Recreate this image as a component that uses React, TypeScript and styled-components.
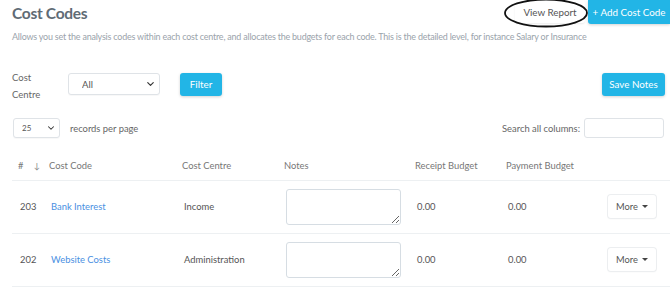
import React from "react"
import styled, { createGlobalStyle } from "styled-components"
import { ChevronDown } from "lucide-react"

const GlobalStyle = createGlobalStyle`
  html, body {
    margin: 0;
    padding: 0;
    background: #fff;
  }
  body {
    font-family: "Lato", "Noto Sans", sans-serif;
    color: #5e6770;
    width: 670px;
    height: 287px;
    overflow: hidden;
  }
`

const Page = styled.div`
  padding: 0 6px 0 12px;
  box-sizing: border-box;
  width: 670px;
`

const Header = styled.div`
  display: flex;
  align-items: flex-start;
  justify-content: space-between;
`

const Title = styled.h1`
  margin: 4px 0 0;
  font-size: 15.5px;
  font-weight: 700;
  color: #5f6b75;
  letter-spacing: -0.3px;
`

const HeaderActions = styled.div`
  position: relative;
  display: flex;
  align-items: flex-start;
  margin-right: -6px;
`

const Button = styled.button<{ $variant?: "primary" | "plain" | "light" }>`
  font-family: inherit;
  font-size: 9.8px;
  border-radius: 3px;
  cursor: pointer;
  height: 23px;
  padding: 0 10px;
  border: none;
  white-space: nowrap;
  color: ${p => (p.$variant === "primary" ? "#fff" : "#555")};
  background: ${p => (p.$variant === "primary" ? "#22b5e6" : "#fff")};
  box-shadow: ${p =>
    p.$variant === "primary"
      ? "0 1px 3px rgba(0,0,0,0.18)"
      : p.$variant === "light"
      ? "0 0 0 1px #eceef0, 0 1px 2px rgba(0,0,0,0.06)"
      : "0 1px 2px rgba(0,0,0,0.08)"};
`

const ViewReportButton = styled(Button)`
  margin-right: 3px;
  width: 70px;
  padding: 0;
`

const AddButton = styled(Button)`
  width: 82px;
  height: 24px;
  padding: 0;
  border-radius: 0 0 0 3px;
`

const Ring = styled.svg`
  position: absolute;
  left: -12px;
  top: -2px;
  pointer-events: none;
`

const Subtitle = styled.p`
  margin: 7px 0 0;
  font-size: 8.95px;
  letter-spacing: -0.2px;
  color: #9aa3ab;
  white-space: nowrap;
`

const FilterRow = styled.div`
  display: flex;
  align-items: center;
  margin-top: 23px;
`

const FieldLabel = styled.label`
  font-size: 9.5px;
  line-height: 17px;
  color: #666;
  width: 56px;
  padding-top: 4px;
`

const SelectWrap = styled.div<{ $width: number }>`
  position: relative;
  width: ${p => p.$width}px;
  display: flex;
`

const Select = styled.select<{ $small?: boolean }>`
  appearance: none;
  width: 100%;
  height: ${p => (p.$small ? 20 : 22)}px;
  border: 1px solid #dfe3e7;
  border-radius: 3px;
  background: #fff;
  font-family: inherit;
  font-size: ${p => (p.$small ? 8 : 9.5)}px;
  color: #555;
  padding: 0 0 0 ${p => (p.$small ? 8 : 13)}px;
  box-shadow: 0 1px 1px rgba(0, 0, 0, 0.03);
`

const Chevron = styled(ChevronDown)`
  position: absolute;
  right: 4px;
  top: 50%;
  transform: translateY(-50%);
  pointer-events: none;
  color: #333;
`

const FilterButton = styled(Button)`
  margin-left: 20px;
  width: 42px;
  padding: 0;
`

const Spacer = styled.div`
  flex: 1;
`

const SaveButton = styled(Button)`
  width: 63px;
  padding: 0;
  margin-right: -1px;
`

const ControlsRow = styled.div`
  display: flex;
  align-items: center;
  margin-top: 15px;
  margin-left: 1px;
`

const SmallText = styled.span`
  font-size: 9.4px;
  color: #666;
`

const RecordsText = styled(SmallText)`
  margin-left: 10px;
`

const SearchInput = styled.input`
  width: 80px;
  height: 20px;
  box-sizing: border-box;
  border: 1px solid #dfe3e7;
  border-radius: 3px;
  margin-left: 4px;
  margin-right: 0;
`

const Table = styled.table`
  margin-top: 14px;
  width: 658px;
  border-collapse: collapse;
  table-layout: fixed;
`

const Th = styled.th<{ $width?: number }>`
  box-sizing: border-box;
  width: ${p => (p.$width ? `${p.$width}px` : "auto")};
  text-align: left;
  font-weight: 400;
  font-size: 9.4px;
  color: #777;
  padding: 0 6px;
  height: 28px;
  border-bottom: 1px solid #edf0f2;
  white-space: nowrap;
`

const SortArrow = styled.span`
  font-size: 8.5px;
  margin-left: 10px;
  color: #888;
`

const Td = styled.td`
  font-size: 9.4px;
  color: #555;
  padding: 0 8px;
  height: 52px;
  border-bottom: 1px solid #edf0f2;
  white-space: nowrap;
`

const Link = styled.a`
  color: #4a90e2;
  text-decoration: none;
`

const NotesInput = styled.textarea`
  display: block;
  width: 115px;
  height: 36px;
  box-sizing: border-box;
  border: 1px solid #d6dde3;
  border-radius: 3px;
  resize: vertical;
`

const MoreButton = styled(Button)`
  width: 48px;
  padding: 0;
  display: inline-flex;
  align-items: center;
  justify-content: center;
  gap: 4px;
  font-size: 9.3px;
`

const Caret = styled.span`
  width: 0;
  height: 0;
  border-left: 3px solid transparent;
  border-right: 3px solid transparent;
  border-top: 3px solid #444;
`

interface ICode {
  id: number
  name: string
  centre: string
  receipt: string
  payment: string
}

const codes: ICode[] = [
  { id: 203, name: "Bank Interest", centre: "Income", receipt: "0.00", payment: "0.00" },
  { id: 202, name: "Website Costs", centre: "Administration", receipt: "0.00", payment: "0.00" },
]

const App = () => (
  <>
    <GlobalStyle />
    <Page>
      <Header>
        <div>
          <Title>Cost Codes</Title>
        </div>
        <HeaderActions>
          <ViewReportButton $variant="plain">View Report</ViewReportButton>
          <AddButton $variant="primary">+ Add Cost Code</AddButton>
          <Ring width="86" height="31" viewBox="0 0 86 31">
            <ellipse cx="43" cy="15" rx="41" ry="13.5" fill="none" stroke="#111" strokeWidth="1.8" />
          </Ring>
        </HeaderActions>
      </Header>
      <Subtitle>
        Allows you set the analysis codes within each cost centre, and allocates the budgets for each code. This is the detailed level, for instance Salary or Insurance
      </Subtitle>

      <FilterRow>
        <FieldLabel>
          Cost
          <br />
          Centre
        </FieldLabel>
        <SelectWrap $width={92}>
          <Select defaultValue="All">
            <option>All</option>
          </Select>
          <Chevron size={11} strokeWidth={2.5} />
        </SelectWrap>
        <FilterButton $variant="primary">Filter</FilterButton>
        <Spacer />
        <SaveButton $variant="primary">Save Notes</SaveButton>
      </FilterRow>

      <ControlsRow>
        <SelectWrap $width={47}>
          <Select $small defaultValue="25">
            <option>25</option>
          </Select>
          <Chevron size={10} strokeWidth={2.5} />
        </SelectWrap>
        <RecordsText>records per page</RecordsText>
        <Spacer />
        <SmallText>Search all columns:</SmallText>
        <SearchInput />
      </ControlsRow>

      <Table>
        <thead>
          <tr>
            <Th $width={31}>
              #<SortArrow>↓</SortArrow>
            </Th>
            <Th $width={133}>Cost Code</Th>
            <Th $width={102}>Cost Centre</Th>
            <Th $width={131}>Notes</Th>
            <Th $width={91}>Receipt Budget</Th>
            <Th $width={100}>Payment Budget</Th>
            <Th />
          </tr>
        </thead>
        <tbody>
          {codes.map(code => (
            <tr key={code.id}>
              <Td>{code.id}</Td>
              <Td>
                <Link href="#">{code.name}</Link>
              </Td>
              <Td>{code.centre}</Td>
              <Td>
                <NotesInput />
              </Td>
              <Td>{code.receipt}</Td>
              <Td>{code.payment}</Td>
              <Td>
                <MoreButton $variant="light">
                  More <Caret />
                </MoreButton>
              </Td>
            </tr>
          ))}
        </tbody>
      </Table>
    </Page>
  </>
)

export default App
